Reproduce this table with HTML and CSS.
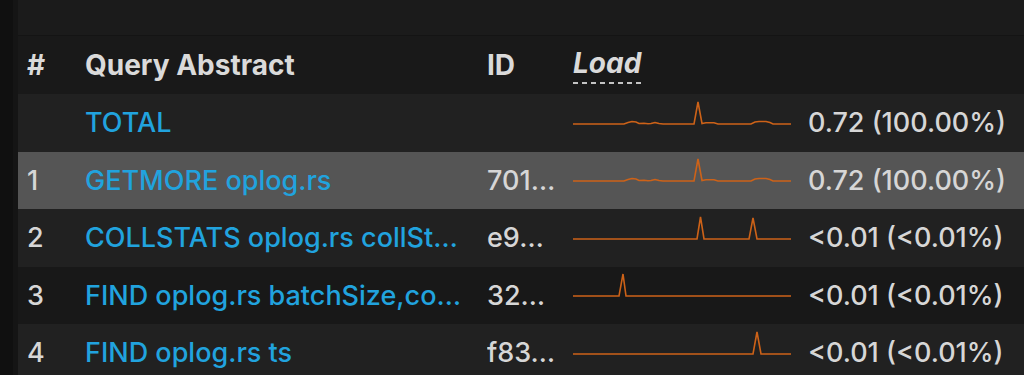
FILE: index.html
```html
<!DOCTYPE html>
<html>
<head>
<meta charset="utf-8">
<link rel="stylesheet" href="styles.css">
</head>
<body>
<div class="app">
  <div class="sidebar"></div>
  <div class="gutter"></div>
  <div class="panel">
    <div class="toolbar"></div>
    <div class="table">
      <div class="row head">
        <div class="c-num">#</div>
        <div class="c-query">Query Abstract</div>
        <div class="c-id">ID</div>
        <div class="c-load"><span class="load-label">Load</span></div>
        <div class="c-val"></div>
      </div>
      <div class="row alt">
        <div class="c-num"></div>
        <div class="c-query link">TOTAL</div>
        <div class="c-id"></div>
        <div class="c-load"><svg class="spark" viewBox="0 0 218 46"><polyline points="0,24 51,24 55,22.5 59,21.5 63,22 66,23.5 71,23.3 75,23.8 78,23.5 82,22.5 86,23.5 90,24 121,24 125,2 129,23.5 133,22.8 141,22.8 145,24 178,24 182,22 186,21.5 193,21.5 197,22.5 200,24 218,24"/></svg></div>
        <div class="c-val">0.72 (100.00%)</div>
      </div>
      <div class="row selected">
        <div class="c-num">1</div>
        <div class="c-query link">GETMORE oplog.rs</div>
        <div class="c-id">701…</div>
        <div class="c-load"><svg class="spark" viewBox="0 0 218 46"><polyline points="0,24 51,24 55,22.5 59,21.5 63,22 66,23.5 71,23.3 75,23.8 78,23.5 82,22.5 86,23.5 90,24 121,24 125,2 129,23.5 133,22.8 141,22.8 145,24 178,24 182,22 186,21.5 193,21.5 197,22.5 200,24 218,24"/></svg></div>
        <div class="c-val">0.72 (100.00%)</div>
      </div>
      <div class="row alt">
        <div class="c-num">2</div>
        <div class="c-query link">COLLSTATS oplog.rs collSt…</div>
        <div class="c-id">e9…</div>
        <div class="c-load"><svg class="spark" viewBox="0 0 218 46"><polyline points="0,24 124,24 127.5,2 131,24 176,24 180,3 184,24 218,24"/></svg></div>
        <div class="c-val">&lt;0.01 (&lt;0.01%)</div>
      </div>
      <div class="row">
        <div class="c-num">3</div>
        <div class="c-query link">FIND oplog.rs batchSize,co…</div>
        <div class="c-id">32…</div>
        <div class="c-load"><svg class="spark" viewBox="0 0 218 46"><polyline points="0,24 46,24 50,2 53,24 218,24"/></svg></div>
        <div class="c-val">&lt;0.01 (&lt;0.01%)</div>
      </div>
      <div class="row alt">
        <div class="c-num">4</div>
        <div class="c-query link">FIND oplog.rs ts</div>
        <div class="c-id">f83…</div>
        <div class="c-load"><svg class="spark" viewBox="0 0 218 46"><polyline points="0,24 180,24 184,2 188,24 218,24"/></svg></div>
        <div class="c-val">&lt;0.01 (&lt;0.01%)</div>
      </div>
    </div>
  </div>
</div>
</body>
</html>
```
FILE: styles.css
```css
html, body {
  margin: 0;
  padding: 0;
  background: #101010;
  height: 100%;
  overflow: hidden;
}
.app {
  display: flex;
  height: 375px;
  font-family: Inter, "Liberation Sans", Arial, sans-serif;
  font-size: 27px;
  font-weight: 500;
  color: #d6d6d6;
}
.sidebar {
  width: 13px;
  background: #101010;
}
.gutter {
  width: 5px;
  background: #151515;
}
.panel {
  flex: 1;
  display: flex;
  flex-direction: column;
  background: #191919;
  min-width: 0;
}
.toolbar {
  height: 35px;
  background: #1b1b1b;
  border-bottom: 1px solid #141414;
  flex: none;
}
.table {
  display: flex;
  flex-direction: column;
}
.row {
  display: grid;
  grid-template-columns: 58px 402px 86px 235px 1fr;
  align-items: center;
  height: 57.5px;
  padding-left: 9px;
  background: #181818;
  white-space: nowrap;
}
.row.head {
  height: 58px;
  background: #191919;
  font-size: 28px;
  font-weight: 700;
  color: #dadada;
}
.row.alt {
  background: #212121;
}
.row.selected {
  background: #555555;
}
.c-query, .c-id {
  overflow: hidden;
}
.link {
  color: #21a3de;
}
.c-load {
  display: flex;
  align-items: center;
}
.load-label {
  font-style: italic;
  padding-bottom: 4px;
  background: repeating-linear-gradient(to right, #c4c4c4 0 5px, transparent 5px 9px) left bottom / 100% 2px no-repeat;
}
.spark {
  width: 218px;
  height: 46px;
  display: block;
}
.spark polyline {
  fill: none;
  stroke: #cd6218;
  stroke-width: 1.6;
}
```
